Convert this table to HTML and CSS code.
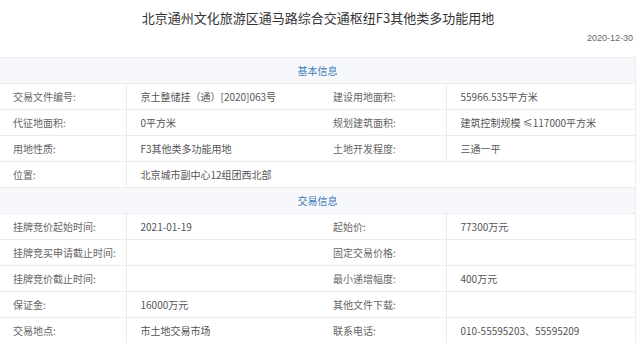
FILE: index.html
```html
<!DOCTYPE html>
<html lang="zh-CN">
<head>
	<meta charset="UTF-8">
	<title>土地详情</title>
	<link rel="stylesheet" href="styles.css">
</head>
<body>
	<div class="detail">
		<h1 class="title">北京通州文化旅游区通马路综合交通枢纽F3其他类多功能用地</h1>
		<div class="date">2020-12-30</div>
		<table class="info">
			<colgroup>
				<col class="c-label"><col class="c-value"><col class="c-label"><col>
			</colgroup>
			<tr class="sec"><td colspan="4">基本信息</td></tr>
			<tr>
				<td class="lab">交易文件编号:</td><td>京土整储挂（通）[2020]063号</td>
				<td class="lab">建设用地面积:</td><td>55966.535平方米</td>
			</tr>
			<tr>
				<td class="lab">代征地面积:</td><td>0平方米</td>
				<td class="lab">规划建筑面积:</td><td>建筑控制规模 ≤117000平方米</td>
			</tr>
			<tr>
				<td class="lab">用地性质:</td><td>F3其他类多功能用地</td>
				<td class="lab">土地开发程度:</td><td>三通一平</td>
			</tr>
			<tr>
				<td class="lab">位置:</td><td colspan="3">北京城市副中心12组团西北部</td>
			</tr>
			<tr class="sec"><td colspan="4">交易信息</td></tr>
			<tr>
				<td class="lab">挂牌竞价起始时间:</td><td>2021-01-19</td>
				<td class="lab">起始价:</td><td>77300万元</td>
			</tr>
			<tr>
				<td class="lab">挂牌竞买申请截止时间:</td><td></td>
				<td class="lab">固定交易价格:</td><td></td>
			</tr>
			<tr>
				<td class="lab">挂牌竞价截止时间:</td><td></td>
				<td class="lab">最小递增幅度:</td><td>400万元</td>
			</tr>
			<tr>
				<td class="lab">保证金:</td><td>16000万元</td>
				<td class="lab">其他文件下载:</td><td></td>
			</tr>
			<tr>
				<td class="lab">交易地点:</td><td>市土地交易市场</td>
				<td class="lab">联系电话:</td><td>010-55595203、55595209</td>
			</tr>
		</table>
	</div>
</body>
</html>
```

FILE: styles.css
```css
body{margin:0;background:#fff;font-family:"Noto Sans CJK SC","Noto Sans",sans-serif;color:#555;}
.detail{width:636px;}

.title{margin:0;padding-top:8px;height:19px;line-height:19px;font-size:13px;font-weight:normal;color:#333;text-align:center;}
.date{margin-top:3px;height:16px;line-height:16px;padding-right:3px;font-size:9px;color:#666;text-align:right;font-family:"Liberation Sans",sans-serif;}

.info{margin-top:11px;width:636px;border-collapse:collapse;table-layout:fixed;font-size:10px;}
.info .c-label{width:126px;}
.info .c-value{width:194px;}
.info td{height:25px;padding:0 0 0 14px;border-top:1px solid #ececec;white-space:nowrap;}
.info td.lab{padding-left:13px;border-right:1px solid #ebebeb;color:#666;}
.info tr td:last-child{border-right:1px solid #ececec;}
.info .sec td{padding:0;text-align:center;background:#f6f8fb;color:#3f7cba;}
```
